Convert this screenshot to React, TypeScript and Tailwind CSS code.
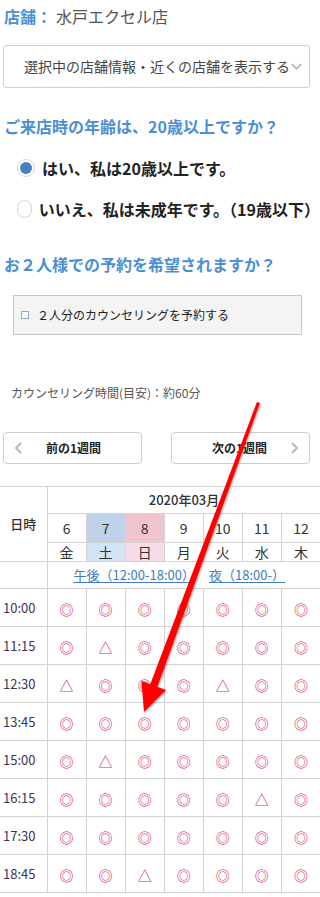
import React from "react";

const days = [
  { d: "6", w: "金", kind: "" },
  { d: "7", w: "土", kind: "sat" },
  { d: "8", w: "日", kind: "sun" },
  { d: "9", w: "月", kind: "" },
  { d: "10", w: "火", kind: "" },
  { d: "11", w: "水", kind: "" },
  { d: "12", w: "木", kind: "" },
];

const slots: { time: string; marks: string }[] = [
  { time: "10:00", marks: "ooooooo" },
  { time: "11:15", marks: "otooooo" },
  { time: "12:30", marks: "toootoo" },
  { time: "13:45", marks: "ooooooo" },
  { time: "15:00", marks: "otooooo" },
  { time: "16:15", marks: "oooooto" },
  { time: "17:30", marks: "ooooooo" },
  { time: "18:45", marks: "ootoooo" },
];

const font = { fontFamily: '"Noto Sans CJK JP", "Noto Sans", sans-serif' };

function Chevron({ dir, className }: { dir: "down" | "left" | "right"; className?: string }) {
  const d =
    dir === "down" ? "M2 4 L7 9 L12 4" : dir === "left" ? "M9 2 L4 7 L9 12" : "M5 2 L10 7 L5 12";
  return (
    <svg width="14" height="14" viewBox="0 0 14 14" className={className}>
      <path d={d} fill="none" stroke="#b5b5b5" strokeWidth="1.8" />
    </svg>
  );
}

function Mark({ m }: { m: string }) {
  return (
    <span className="text-[14px] leading-none font-medium text-[#d92c63]">{m === "t" ? "△" : "◎"}</span>
  );
}

export default function App() {
  return (
    <div className="relative w-[320px] h-[897px] overflow-hidden bg-white text-[#333]" style={font}>
      {/* Store */}
      <div className="pl-1 pt-[5px] h-[27px] flex items-center text-[16px] leading-[22px]">
        <span className="font-bold text-[#4a8fd6]">店舗：</span>
        <span className="ml-1 text-[#555]">水戸エクセル店</span>
      </div>

      {/* Store select */}
      <div className="mt-[18px] ml-[3px] w-[307px] h-[43px] border border-[#cfcfcf] rounded-[3px] flex items-center pl-[20px] pr-[6px]">
        <span className="text-[14px] text-[#444] whitespace-nowrap">選択中の店舗情報・近くの店舗を表示する</span>
        <Chevron dir="down" className="ml-auto" />
      </div>

      {/* Age question */}
      <h2 className="mt-[27px] pl-1 text-[16px] leading-[22px] font-bold text-[#4a8fd6] whitespace-nowrap">
        ご来店時の年齢は、20歳以上ですか？
      </h2>
      <div className="mt-[20px] pl-[17px] flex flex-col gap-[19px]">
        <label className="flex items-center gap-[7px] h-[22px]">
          <span className="w-[18px] h-[18px] rounded-full border border-[#d8d8d8] flex items-center justify-center">
            <span className="w-[12px] h-[12px] rounded-full bg-[#4a80c2]" />
          </span>
          <span className="text-[16px] font-bold text-[#222] whitespace-nowrap">はい、私は20歳以上です。</span>
        </label>
        <label className="flex items-center gap-[7px] h-[22px]">
          <span className="w-[18px] h-[18px] rounded-full border border-[#d4d4d4]" />
          <span className="text-[16px] font-bold text-[#222] whitespace-nowrap">いいえ、私は未成年です。（19歳以下）</span>
        </label>
      </div>

      {/* Pair question */}
      <h2 className="mt-[33px] pl-1 text-[16px] leading-[22px] font-bold text-[#4a8fd6] whitespace-nowrap">
        お２人様での予約を希望されますか？
      </h2>
      <div className="mt-[20px] ml-[13px] w-[289px] h-[40px] bg-[#f4f4f4] border border-[#c8c8c8] flex items-center pl-[7px]">
        <span className="w-[8px] h-[8px] border border-[#8fa6c4] bg-white" />
        <span className="ml-[8px] text-[12px] text-[#222]">２人分のカウンセリングを予約する</span>
      </div>

      {/* Counseling time */}
      <p className="mt-[49px] pl-[11px] text-[12px] leading-[18px] text-[#555]">
        カウンセリング時間(目安)：約60分
      </p>

      {/* Week nav */}
      <div className="mt-[30px] ml-[3px] w-[307px] flex justify-between">
        <button className="w-[139px] h-[32px] border border-[#cccccc] rounded-[4px] bg-white flex items-center px-[8px]">
          <Chevron dir="left" />
          <span className="flex-1 text-center pr-[12px] text-[12px] font-bold text-[#222]">前の1週間</span>
        </button>
        <button className="w-[139px] h-[32px] border border-[#cccccc] rounded-[4px] bg-white flex items-center px-[8px]">
          <span className="flex-1 text-center pl-[12px] text-[12px] font-bold text-[#222]">次の1週間</span>
          <Chevron dir="right" />
        </button>
      </div>

      {/* Calendar */}
      <table className="mt-[22px] w-[321px] border-collapse table-fixed text-[#333]">
        <colgroup>
          <col className="w-[47px]" />
          {days.map((d) => (
            <col key={d.d} className="w-[39px]" />
          ))}
        </colgroup>
        <thead>
          <tr className="h-[27px]">
            <th rowSpan={3} className="border-t border-b border-r border-[#d3d3d3] text-[13px] font-medium">
              日時
            </th>
            <th colSpan={7} className="border border-[#d3d3d3] border-r-0 text-[13px] font-medium">
              2020年03月
            </th>
          </tr>
          <tr className="h-[29px]">
            {days.map((d) => (
              <td
                key={d.d}
                className={`border border-[#d3d3d3] text-center text-[14px] ${
                  d.kind === "sat" ? "bg-[#bed2ea]" : d.kind === "sun" ? "bg-[#f1c4cd]" : ""
                }`}
              >
                {d.d}
              </td>
            ))}
          </tr>
          <tr className="h-[19px]">
            {days.map((d) => (
              <td
                key={d.d}
                className={`border border-[#d3d3d3] text-center text-[14px] leading-[17px] ${
                  d.kind === "sat" ? "bg-[#d3e3f4]" : d.kind === "sun" ? "bg-[#f7dbe6]" : ""
                }`}
              >
                {d.w}
              </td>
            ))}
          </tr>
          <tr className="h-[27px]">
            <td className="border border-l-0 border-[#d3d3d3]" />
            <td colSpan={7} className="border border-r-0 border-[#d3d3d3] text-[13px] whitespace-nowrap pl-[26px]">
              <a className="text-[#3d7cc2] underline underline-offset-2">午後（12:00-18:00）</a>
              <a className="ml-[14px] text-[#3d7cc2] underline underline-offset-2">夜（18:00-）</a>
            </td>
          </tr>
        </thead>
        <tbody>
          {slots.map((s) => (
            <tr key={s.time} className="h-[38px]">
              <td className="border border-l-0 border-[#d3d3d3] text-[13px] text-[#3b3356] pl-[3px]">{s.time}</td>
              {s.marks.split("").map((m, i) => (
                <td key={i} className="border border-[#d3d3d3] text-center">
                  <Mark m={m} />
                </td>
              ))}
            </tr>
          ))}
        </tbody>
      </table>

      {/* Red annotation arrow */}
      <svg
        className="absolute left-0 top-0 pointer-events-none"
        width="320"
        height="897"
        viewBox="0 0 320 897"
      >
        <defs>
          <filter id="sh" x="-20%" y="-20%" width="140%" height="140%">
            <feDropShadow dx="1" dy="1" stdDeviation="1.2" floodColor="#000" floodOpacity="0.35" />
          </filter>
        </defs>
        <g filter="url(#sh)">
          <polygon points="257,402 260,403 157,688 150,685" fill="#ff0000" />
          <polygon points="144,712 141.5,681 166,690" fill="#ff0000" />
        </g>
      </svg>
    </div>
  );
}
